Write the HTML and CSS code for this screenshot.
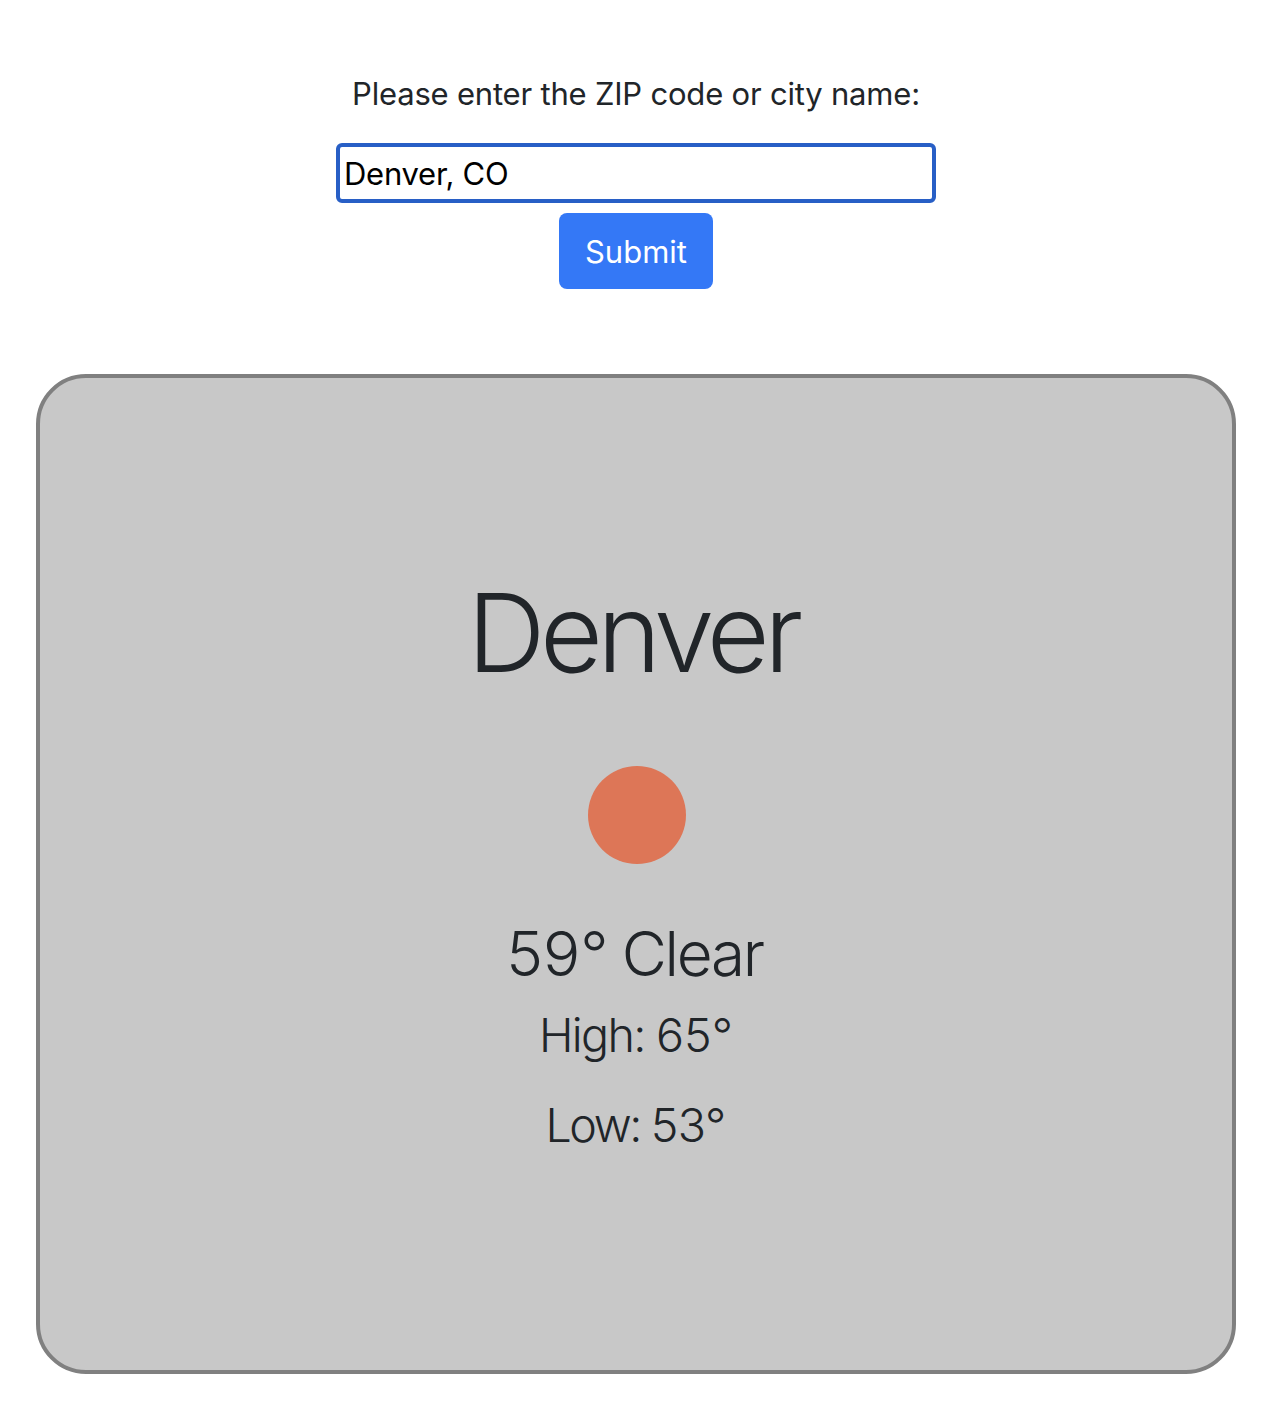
FILE: index.html
```html
<!DOCTYPE html>
<html lang="en">
<head>
<meta charset="utf-8">
<title>Weather</title>
<link rel="stylesheet" href="styles.css">
</head>
<body>
<form class="search">
  <label class="search-label" for="city">Please enter the ZIP code or city name:</label>
  <input class="search-input" id="city" type="text" value="Denver, CO">
  <button class="search-button" type="button">Submit</button>
</form>
<main class="card">
  <h1 class="city">Denver</h1>
  <svg class="icon" viewBox="0 0 100 100" aria-hidden="true"><circle cx="50" cy="50" r="49" fill="#dd7657"/></svg>
  <p class="current"><span class="degrees">59°</span> Clear</p>
  <p class="range high">High: <span class="degrees">65°</span></p>
  <p class="range low">Low: <span class="degrees">53°</span></p>
</main>
</body>
</html>
```

FILE: styles.css
```css
* { box-sizing: border-box; }
body {
  margin: 0;
  padding: 70px 30px 32px 36px;
  background: #fff;
  color: #212529;
  font-family: Inter, sans-serif;
}
.search {
  display: flex;
  flex-direction: column;
  align-items: center;
  height: 304px;
}
.search-label { height: 73px; font-size: 31px; line-height: 48px; letter-spacing: -0.2px; white-space: nowrap; }
.search-input {
  width: 600px;
  height: 60px;
  padding: 1px 4px 0;
  border: 4px solid #285fc6;
  border-radius: 6px;
  outline: none;
  background: #fff;
  color: #000;
  font: 31px Inter, sans-serif;
  letter-spacing: -0.25px;
}
.search-button {
  width: 154px;
  height: 76px;
  margin-top: 10px;
  padding: 1px 0 0;
  border: 0;
  border-radius: 8px;
  background: #3478f6;
  color: #fff;
  font: 31px Inter, sans-serif;
}
.card {
  display: flex;
  flex-direction: column;
  align-items: center;
  width: 1200px;
  height: 1000px;
  padding-top: 189px;
  border: 4px solid #808080;
  border-radius: 50px;
  background: #c8c8c8;
  font-weight: 300;
  white-space: nowrap;
}
.city { margin: 0 7px 0 0; font-size: 108.6px; line-height: 132px; font-weight: 300; letter-spacing: -5.5px; }
.icon { width: 100px; height: 100px; margin: 66px 0 53px 2px; }
.current { margin: 0 3px 0 0; font-size: 62px; line-height: 72px; letter-spacing: -2.3px; word-spacing: -2px; }
.range { margin: 0; font-size: 46.6px; line-height: 72px; letter-spacing: -1.7px; }
.high { margin-top: 9px; }
.low { margin: 18px 1px 0 0; letter-spacing: -2.4px; }
.degrees { letter-spacing: 0; }
.low .degrees { letter-spacing: -0.6px; }
```
